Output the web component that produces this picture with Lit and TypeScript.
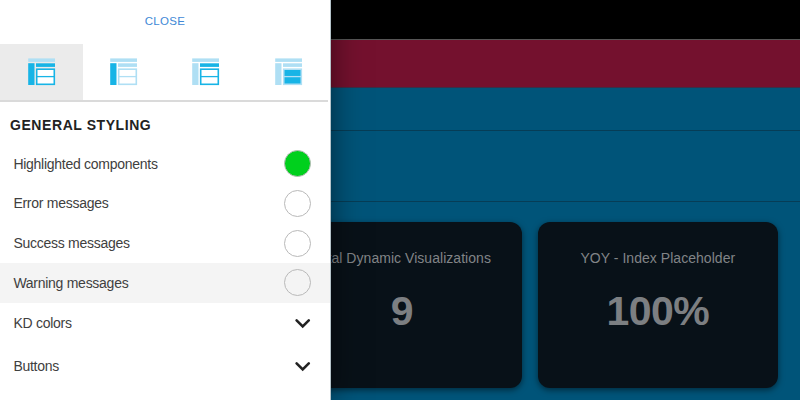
import { LitElement, html, svg, css } from "lit";
import { customElement, property } from "lit/decorators.js";
import { classMap } from "lit/directives/class-map.js";

const STRONG = "#17b4e6";
const SOFT = "#afdff4";

@customElement("layout-icon")
class LayoutIcon extends LitElement {
  @property() side = SOFT;
  @property() head = SOFT;
  @property() grid = SOFT;
  @property() fill = "none";

  static styles = css`
    :host { display: block; width: 28px; height: 28px; }
    svg { display: block; }
  `;

  render() {
    return svg`<svg width="28" height="28" viewBox="0 0 28 28">
      <rect x="0.2" y="0.4" width="26.8" height="3.5" fill=${SOFT}></rect>
      <rect x="0.2" y="5.2" width="6.3" height="21.8" fill=${this.side}></rect>
      <rect x="8" y="5.3" width="19" height="3.6" fill=${this.head}></rect>
      <rect x="8.7" y="11.2" width="17.6" height="15.1" fill=${this.fill === "none" ? "#fff" : this.fill} stroke=${this.grid} stroke-width="1.6"></rect>
      <path d="M8.7 18.6H26.3" stroke=${this.grid} stroke-width="1.3"></path>
    </svg>`;
  }
}

@customElement("stat-card")
class StatCard extends LitElement {
  @property() label = "";
  @property() value = "";

  static styles = css`
    :host {
      display: flex; flex-direction: column; align-items: center; box-sizing: border-box;
      width: 240px; height: 165.5px; padding: 27px 1px 0 0; border-radius: 12px;
      background: #081118; box-shadow: 0 2px 6px rgba(0, 0, 0, 0.5);
    }
    .label { font-size: 14px; line-height: 18px; letter-spacing: 0.04px; color: #818487; white-space: nowrap; }
    .value { margin-top: 20px; font-size: 41px; line-height: 48px; font-weight: 700; letter-spacing: -0.6px; color: #7c7f82; }
  `;

  render() {
    return html`<div class="label">${this.label}</div><div class="value">${this.value}</div>`;
  }
}

@customElement("app-root")
class AppRoot extends LitElement {
  static styles = css`
    :host {
      display: block; position: relative; width: 800px; height: 400px; overflow: hidden;
      font-family: "Liberation Sans", Arial, sans-serif; background: #005479;
    }
    .page { display: flex; flex-direction: column; height: 400px; }
    .bar, .brand, .nav, .tools { box-sizing: border-box; flex: none; }
    .bar { height: 39.5px; background: #000; border-bottom: 1px solid #555; }
    .brand { height: 48px; background: #74112e; border-bottom: 1px solid #3a2f48; }
    .nav { height: 43.5px; border-bottom: 1px solid #063d56; }
    .tools { height: 71px; border-bottom: 1px solid #063d56; }
    .cards { display: flex; justify-content: flex-end; gap: 16px; padding: 20px 21.7px 0 0; }
    .drawer {
      position: absolute; left: 0; top: 0; width: 331px; height: 400px; box-sizing: border-box;
      background: #fff; border-right: 1px solid #b5c4ca; box-shadow: 0 0 30px rgba(0, 0, 0, 0.5);
      color: #404040; font-size: 14px; letter-spacing: -0.27px;
    }
    .close {
      height: 43.5px; line-height: 43px; text-align: center;
      font-size: 11.5px; letter-spacing: 0.35px; color: #4189d6;
    }
    .tabs { display: flex; width: 328px; height: 56.5px; border-bottom: 2px solid #dadada; }
    .tab {
      flex: 0 0 82.3px; display: flex; justify-content: center;
      padding: 14.5px 0 0 0.4px; box-sizing: border-box;
    }
    .tab.active { flex-basis: 82.6px; padding-left: 1.4px; background: #ebebeb; }
    h2 {
      margin: 0; padding: 15px 0 0 10px; height: 41.8px; box-sizing: border-box;
      font-size: 14px; line-height: 16px; font-weight: 700; letter-spacing: 0.57px; color: #222;
    }
    .row {
      display: flex; align-items: center; justify-content: space-between; height: 39.7px;
      padding: 0 19px 0 13.4px; box-sizing: border-box;
    }
    .row.hover { background: #f4f4f4; }
    .row.group { height: 43px; padding-bottom: 2px; }
    .dot { width: 27px; height: 27px; box-sizing: border-box; border: 1px solid #b9b9b9; border-radius: 50%; }
    .dot.green { background: #00d01d; }
    .chev { display: block; }
  `;

  colors = ["Highlighted components", "Error messages", "Success messages", "Warning messages"];
  groups = ["KD colors", "Buttons"];

  render() {
    return html`
      <div class="page">
        <div class="bar"></div>
        <div class="brand"></div>
        <div class="nav"></div>
        <div class="tools"></div>
        <div class="cards">
          <stat-card label="Total Dynamic Visualizations" value="9"></stat-card>
          <stat-card label="YOY - Index Placeholder" value="100%"></stat-card>
        </div>
      </div>
      <div class="drawer">
        <div class="close">CLOSE</div>
        <div class="tabs">
          <div class="tab active"><layout-icon side=${STRONG} head=${STRONG} grid=${STRONG}></layout-icon></div>
          <div class="tab"><layout-icon side=${STRONG}></layout-icon></div>
          <div class="tab"><layout-icon head=${STRONG} grid=${STRONG}></layout-icon></div>
          <div class="tab"><layout-icon fill=${STRONG}></layout-icon></div>
        </div>
        <h2>GENERAL STYLING</h2>
        ${this.colors.map((name, i) => html`
          <div class=${classMap({ row: true, hover: i === 3 })}>
            <span>${name}</span><span class=${classMap({ dot: true, green: i === 0 })}></span>
          </div>`)}
        ${this.groups.map((name) => html`
          <div class="row group">
            <span>${name}</span>
            <svg class="chev" width="17" height="12" viewBox="0 0 17 12">
              <path d="M2.6 3.4L8.7 9.5L14.8 3.4" fill="none" stroke="#222" stroke-width="2.6" stroke-linecap="round"></path>
            </svg>
          </div>`)}
      </div>
    `;
  }
}
